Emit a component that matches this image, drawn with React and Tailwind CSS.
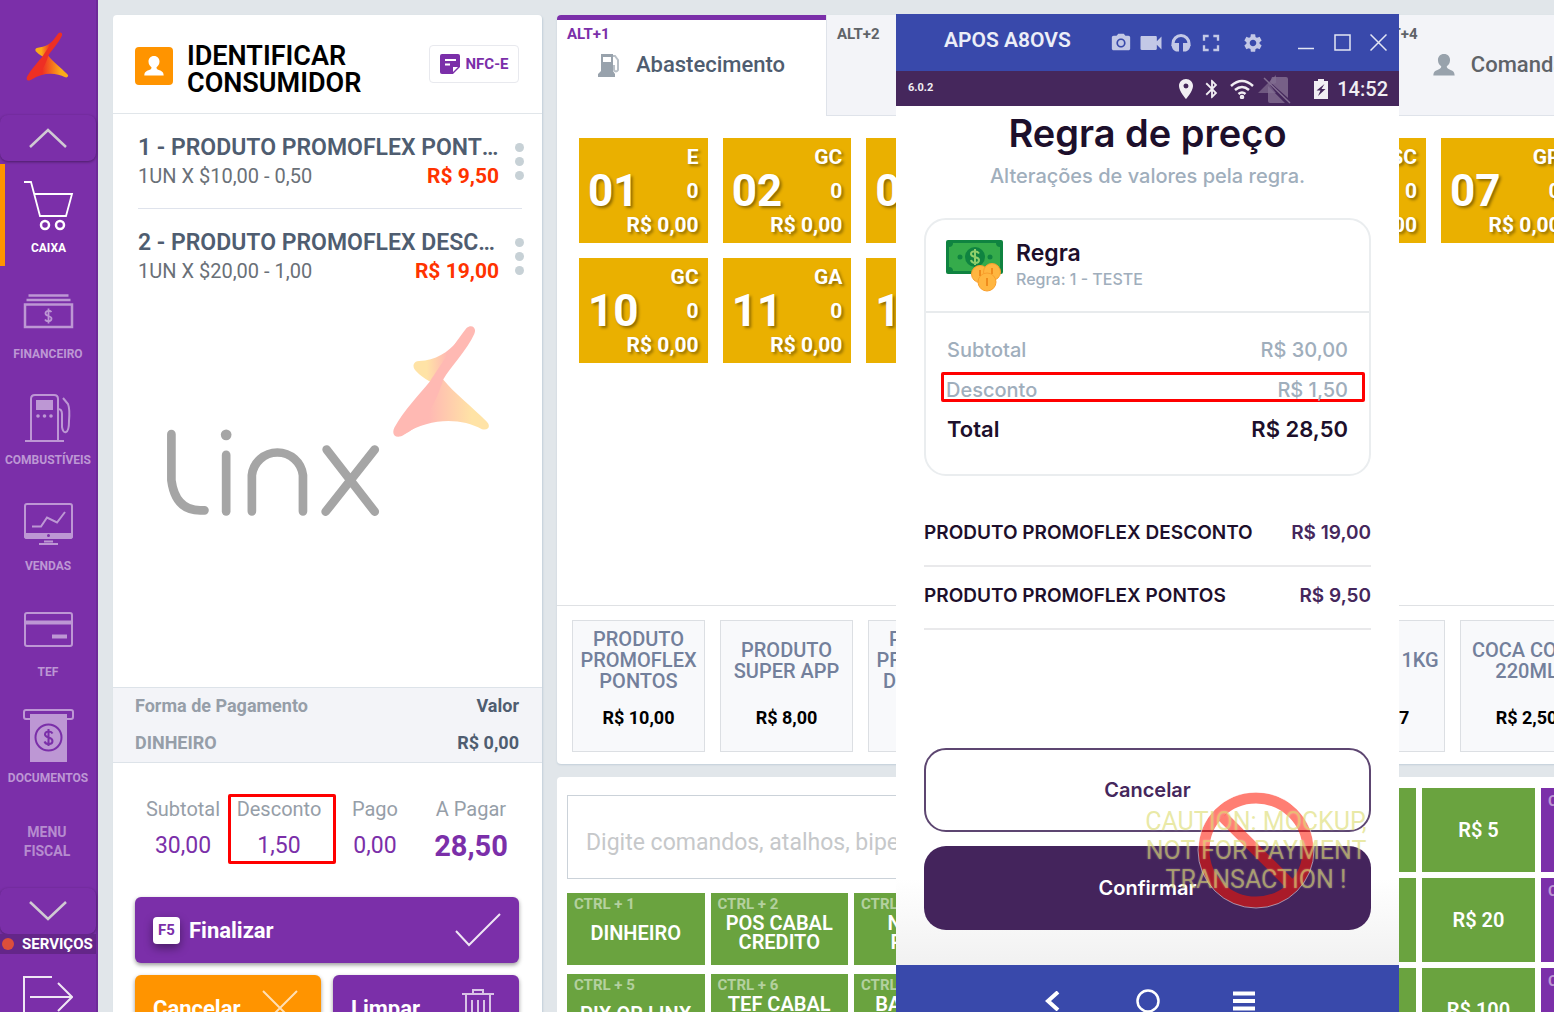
import React from "react"
import {
  MdPhotoCamera, MdVideocam, MdFullscreen, MdSettings,
  MdLocationOn, MdBluetooth, MdWifi,
} from "react-icons/md"

const ROBOTO = "font-['Roboto','Liberation_Sans',sans-serif]"
const INTER = "font-['Inter','Liberation_Sans',sans-serif]"

function Star({ id, soft }) {
  const red = soft ? '#ffb9b3' : '#ee2f24'
  const yellow = soft ? '#ffe3a6' : '#fbab18'
  return (
    <g>
      <defs>
        <linearGradient id={id + 'a'} x1="0" x2="1" y1="0" y2="0">
          <stop offset="0.3" stopColor={yellow} />
          <stop offset="0.75" stopColor={red} />
        </linearGradient>
        <linearGradient id={id + 'b'} x1="0" x2="1" y1="0" y2="0">
          <stop offset="0.3" stopColor={red} />
          <stop offset="0.8" stopColor={yellow} />
        </linearGradient>
      </defs>
      <path fill={`url(#${id}a)`} d="M1042 92 C1012 128 975 150 926 153 C907 154 905 170 915 181 Q932 200 958 214 L1000 190 Z" />
      <path fill={`url(#${id}b)`} d="M998 208 C1030 248 1085 290 1128 334 C1142 348 1133 362 1114 357 C1050 322 960 322 880 372 L940 240 Z" />
      <path fill={red} d="M1068 54 C1082 41 1100 52 1091 72 C1070 120 1020 170 998 208 C985 255 955 312 925 345 C905 358 885 372 872 378 C852 384 843 370 852 352 C880 300 925 255 958 214 C985 175 1035 95 1068 54 Z" />
    </g>
  )
}

function LinxLogo() {
  return (
    <svg viewBox="168 45 970 575" className="h-[192px] w-[324px]" role="img" aria-label="Linx">
      <Star id="big" soft />
      <g fill="none" stroke="#a5a5a5" strokeWidth="26" strokeLinecap="round">
        <path d="M184 372 V510 Q196 600 270 600 H283" />
        <path d="M348 434 V603" />
        <path d="M425 603 V495 A77 77 0 0 1 578 495 V603" />
        <path d="M649 418 L793 604 M793 418 L646 604" />
      </g>
      <circle cx="348" cy="374" r="16" fill="#a5a5a5" />
    </svg>
  )
}

function PersonIcon({ className }) {
  return (
    <svg viewBox="0 0 20 20" className={className} fill="currentColor" aria-hidden="true">
      <path d="M10 0 C6.500 0 4.500 2.500 4.500 5.500 C4.500 8.500 6 10 7.500 11.200 C7.500 13 6.500 13.500 4.500 14.300 C2 15.300 0.500 16 0.300 19.500 H19.700 C19.500 16 18 15.300 15.500 14.300 C13.500 13.500 12.500 13 12.500 11.200 C14 10 15.500 8.500 15.500 5.500 C15.500 2.500 13.500 0 10 0 Z" />
    </svg>
  )
}

const line = { fill: 'none', stroke: 'currentColor', strokeWidth: 2 }

const menu = [
  {
    label: 'CAIXA',
    active: true,
    icon: (
      <g {...line}>
        <path d="M0 3 H7 L16 37 H42 L48 15 H10.500" strokeWidth="1.800" />
        <circle cx="21" cy="46" r="4" strokeWidth="2.500" />
        <circle cx="36" cy="46" r="4" strokeWidth="2.500" />
      </g>
    ),
  },
  {
    label: 'FINANCEIRO',
    icon: (
      <g {...line}>
        <path d="M4.500 10.500 H44.500 M2.500 15 H46.500" strokeWidth="2.500" />
        <path d="M1 19.500 H48 V42 H1 Z" strokeWidth="2.500" />
        <path d="M27.500 27 C26 25 21.500 25.500 21.500 28.500 C21.500 31.500 27.500 30.500 27.500 33.500 C27.500 37 22.500 37 21 34.500 M24.500 23.500 V38.500" strokeWidth="1.800" />
      </g>
    ),
  },
  {
    label: 'COMBUSTÍVEIS',
    icon: (
      <g {...line}>
        <path d="M1 50 H40 M7 50 V8 Q7 4 11 4 H30 Q34 4 34 8 V50" />
        <path d="M34 18 Q38 18 38 23 V36 Q39 42 42 41 Q45 40 45 30 Q46 18 44 13 L39 7" />
        <path d="M12 9 H29 V19 H12 Z" fill="currentColor" stroke="none" />
        <g fill="currentColor" stroke="none">
          <circle cx="14" cy="25" r="1.800" />
          <circle cx="20.500" cy="25" r="1.800" />
          <circle cx="27" cy="25" r="1.800" />
        </g>
      </g>
    ),
  },
  {
    label: 'VENDAS',
    icon: (
      <g {...line}>
        <rect x="1" y="7" width="47" height="34" rx="2" />
        <path d="M1 37 H48 V39 Q48 41 46 41 H3 Q1 41 1 39 Z" fill="currentColor" />
        <circle cx="24.500" cy="38.500" r="1.500" fill="#7b2fa9" stroke="none" />
        <path d="M20 44.500 H29 M15 47 H34" />
        <path d="M8 29.500 H17 L23 20.500 L33 25.500 L41 15" />
      </g>
    ),
  },
  {
    label: 'TEF',
    icon: (
      <g {...line}>
        <rect x="1" y="10" width="47" height="33" rx="2" />
        <path d="M1 19.500 H48" strokeWidth="4" />
        <path d="M28 33.500 H43" strokeWidth="4" />
      </g>
    ),
  },
  {
    label: 'DOCUMENTOS',
    icon: (
      <g {...line}>
        <path d="M6 10 H2 Q0 10 0 8 V3 Q0 1 2 1 H47 Q49 1 49 3 V8 Q49 10 47 10 H43" />
        <path d="M6 5 H43 V53 H6 Z" fill="currentColor" stroke="none" />
        <circle cx="24.500" cy="28.500" r="13" stroke="#7b2fa9" />
        <path d="M28.500 24.500 C27 21.500 21 22 21 25.500 C21 29.500 28.500 27.500 28.500 32 C28.500 36 22 36 20.500 32.500 M24.500 20 V37" stroke="#7b2fa9" />
      </g>
    ),
  },
]

function Sidebar() {
  return (
    <aside className="w-[98px] shrink-0 bg-[#7b2fa9] border-r-2 border-[#6d2a98] text-white">
      <div className="flex h-[115px] items-center justify-center pr-[2px] pb-[2px]">
        <svg viewBox="845 45 295 338" className="h-[49px] w-[43px]" role="img" aria-label="Linx">
          <Star id="small" />
        </svg>
      </div>
      <button type="button" aria-label="Subir" className="flex h-[46px] w-full items-center justify-center rounded-lg shadow-[0_1px_3px_rgba(0,0,0,0.4)]">
        <svg viewBox="0 0 38 20" className="h-5 w-[38px]" fill="none" stroke="#d0cad3" strokeWidth="2.500"><path d="M1 19 L19 2 L37 19" /></svg>
      </button>
      <nav className="mt-[3px] flex flex-col gap-1">
        {menu.map((item) => (
          <a
            key={item.label}
            href="#"
            className={
              item.active
                ? 'flex h-[102px] flex-col items-center gap-[7px] border-l-[5px] border-[#ff9400] pt-[15px] pr-1 text-white'
                : 'flex h-[102px] flex-col items-center gap-[7px] pt-[15px] text-[#bd97d4]'
            }
          >
            <svg viewBox="-1 0 51 54" className="h-[54px] w-[51px]" aria-hidden="true">{item.icon}</svg>
            <span className="text-xs leading-4 font-bold">{item.label}</span>
          </a>
        ))}
        <a href="#" className="flex h-[85px] items-center justify-center pr-[2px] pb-px text-center text-sm leading-[19px] font-bold text-[#b68ccf]">MENU<br />FISCAL</a>
      </nav>
      <button type="button" aria-label="Descer" className="mt-[3px] flex h-[46px] w-full items-center justify-center rounded-lg shadow-[0_1px_3px_rgba(0,0,0,0.4)]">
        <svg viewBox="0 0 38 20" className="h-5 w-[38px]" fill="none" stroke="#d0cad3" strokeWidth="2.500"><path d="M1 1 L19 18 L37 1" /></svg>
      </button>
      <div className="flex h-5 items-center gap-2 bg-[#642689] pl-[2px] text-[15px] font-bold">
        <span className="size-3 rounded-full bg-[#db4e3b]" />
        SERVIÇOS
      </div>
      <button type="button" aria-label="Sair" className="flex w-full justify-center pt-[21px]">
        <svg viewBox="0 0 50 44" className="h-11 w-[50px]" fill="none" stroke="#efe6f4" strokeWidth="2"><path d="M29 2 H1 V42 H29 M7 22 H48 M35 8 L49 22 L35 36" /></svg>
      </button>
    </aside>
  )
}

const items = [
  { name: '1 - PRODUTO PROMOFLEX PONTOS', detail: '1UN X $10,00 - 0,50', price: 'R$ 9,50' },
  { name: '2 - PRODUTO PROMOFLEX DESCONTO', detail: '1UN X $20,00 - 1,00', price: 'R$ 19,00' },
]

function Sale() {
  return (
    <section className="flex w-[429px] shrink-0 flex-col self-start rounded bg-white shadow-[1px_1px_2px_#c3cfd9]">
      <header className="flex h-[99px] items-center border-b border-[#e1e6ea] pr-[23px] pl-[22px]">
        <span className="mt-1 flex size-[38px] items-center justify-center rounded bg-[#ff9400] text-white">
          <PersonIcon className="size-5" />
        </span>
        <h1 className="ml-[14px] flex-1 pt-3 text-[27px] leading-[27px] font-semibold text-black">IDENTIFICAR<br />CONSUMIDOR</h1>
        <button type="button" className="flex h-[38px] w-[90px] items-center justify-center gap-[6px] rounded border border-[#e8e9ee] text-[15px] font-bold text-[#7b2fa9]">
          <svg viewBox="0 0 20 20" className="size-5" aria-hidden="true">
            <path fill="#7b2fa9" d="M2 0 H18 Q20 0 20 2 V13 L13 20 H2 Q0 20 0 18 V2 Q0 0 2 0 Z" />
            <path stroke="#fff" strokeWidth="2" d="M5 6 H16 M5 10.500 H10" />
            <path fill="#fff" d="M13 18 V13 H18 Z" />
          </svg>
          NFC-E
        </button>
      </header>

      <div className="min-h-[573px] pl-[25px] pr-5">
        <ul>
          {items.map((item, i) => (
            <li key={item.name} className={i === 0 ? 'flex h-[95px] border-b border-[#dfe3ec] pt-[19px]' : 'flex h-[95px] pt-[19px]'}>
              <div className="w-[361px]">
                <p className="truncate text-[23px] leading-[30px] font-semibold text-[#4f5d70]">{item.name}</p>
                <p className="flex justify-between text-xl leading-[27px] text-[#6a7077]">
                  {item.detail}
                  <span className="text-[21px] font-bold text-[#ff3300]">{item.price}</span>
                </p>
              </div>
              <button type="button" aria-label="Opções" className="ml-4 flex flex-col gap-[5px] pt-[10px]">
                <span className="size-[9px] rounded-full bg-[#c7d1d6]" />
                <span className="size-[9px] rounded-full bg-[#c7d1d6]" />
                <span className="size-[9px] rounded-full bg-[#c7d1d6]" />
              </button>
            </li>
          ))}
        </ul>
        <div className="pt-[21px] pl-7"><LinxLogo /></div>
      </div>

      <table className="w-full border-y border-[#dde3e9] bg-[#f3f4f8] text-lg font-bold text-[#4f5d70]">
        <tbody>
          <tr className="h-[37px]">
            <th className="pl-[22px] text-left font-bold text-[#969ea8]">Forma de Pagamento</th>
            <th className="pr-[23px] text-right font-bold">Valor</th>
          </tr>
          <tr className="h-[38px]">
            <td className="pl-[22px] text-[#969ea8]">DINHEIRO</td>
            <td className="pr-[23px] text-right">R$ 0,00</td>
          </tr>
        </tbody>
      </table>

      <div className="px-[22px] pt-[31px]">
        <dl className="mr-px grid grid-cols-4 text-center">
          <div className="flex h-[70px] flex-col">
            <dt className="pt-[3px] text-xl leading-6 text-[#969ea8]">Subtotal</dt>
            <dd className="pt-2 text-[23px] leading-[34px] text-[#7b2fa9]">30,00</dd>
          </div>
          <div className="-mr-[9px] -ml-[3px] flex h-[70px] flex-col rounded-xs border-[3px] border-[#ff0000] pr-[6px]">
            <dt className="text-xl leading-6 text-[#969ea8]">Desconto</dt>
            <dd className="pt-2 text-[23px] leading-[34px] text-[#7b2fa9]">1,50</dd>
          </div>
          <div className="flex h-[70px] flex-col">
            <dt className="pt-[3px] text-xl leading-6 text-[#969ea8]">Pago</dt>
            <dd className="pt-2 text-[23px] leading-[34px] text-[#7b2fa9]">0,00</dd>
          </div>
          <div className="flex h-[70px] flex-col">
            <dt className="pt-[3px] text-xl leading-6 text-[#969ea8]">A Pagar</dt>
            <dd className="pt-2 text-[29px] leading-[34px] font-bold text-[#7b2fa9]">28,50</dd>
          </div>
        </dl>
        <div className="mt-[33px] mr-px grid grid-cols-2 gap-3 pb-6 text-[22px] font-bold text-white">
          <button type="button" className="col-span-2 flex h-[66px] items-center rounded-md bg-[#7b2fa9] px-[18px] shadow-[0_2px_4px_rgba(0,0,0,0.4)]">
            <span className="flex size-[27px] items-center justify-center rounded bg-white text-[15px] font-bold text-[#7b2fa9] shadow-[0_4px_10px_rgba(0,0,0,0.4)]">F5</span>
            <span className="ml-[9px] flex-1 text-left">Finalizar</span>
            <svg viewBox="0 0 46 34" className="h-[34px] w-[46px]" fill="none" stroke="#efe6f4" strokeWidth="2"><path d="M1 18 L14 32 L45 1" /></svg>
          </button>
          <button type="button" className="flex h-[66px] items-center justify-between rounded-md bg-[#ff9400] px-[18px] shadow-[0_2px_4px_rgba(0,0,0,0.4)]">
            Cancelar
            <svg viewBox="0 0 46 36" className="h-9 w-[46px]" fill="none" stroke="#ffe0b5" strokeWidth="2"><path d="M6 1 L40 35 M40 1 L6 35" /></svg>
          </button>
          <button type="button" className="flex h-[66px] items-center justify-between rounded-md bg-[#7b2fa9] px-[18px] shadow-[0_2px_4px_rgba(0,0,0,0.4)]">
            Limpar
            <svg viewBox="0 0 46 40" className="h-10 w-[46px]" fill="none" stroke="#d9c3e6" strokeWidth="2"><path d="M7 6 H39 M18 6 V2 H28 V6 M11 6 V38 H35 V6 M17 12 V34 M23 12 V34 M29 12 V34" /></svg>
          </button>
        </div>
      </div>
    </section>
  )
}

const pumps = [
  ['01', 'E'], ['02', 'GC'], ['03', 'GA'], ['04', 'E'], ['05', 'GC'], ['06', 'SC'],
  ['07', 'GP'], ['08', 'E'], ['09', 'GC'], ['10', 'GC'], ['11', 'GA'], ['12', 'E'],
]

const products = [
  ['PRODUTO PROMOFLEX PONTOS', 'R$ 10,00'],
  ['PRODUTO SUPER APP', 'R$ 8,00'],
  ['PRODUTO PROMOFLEX DESCONTO', 'R$ 20,00'],
  ['AGUA MINERAL', 'R$ 3,00'],
  ['CAFE', 'R$ 4,00'],
  ['ACUCAR 1KG', 'R$ 5,97'],
  ['COCA COLA 220ML', 'R$ 2,50'],
]

const payments = [
  'DINHEIRO', 'POS CABAL CREDITO', 'NOTA A PRAZO', 'CHEQUE',
  'PIX QR LINX', 'TEF CABAL DEBITO', 'BANRISUL DEBITO', 'CARTEIRA',
]

const cash = ['R$ 2', 'R$ 5', 'CTRL + Q', 'R$ 10', 'R$ 20', 'CTRL + W', 'R$ 50', 'R$ 100', 'CTRL + E']

function FuelIcon() {
  return (
    <svg viewBox="0 0 22 24" className="h-6 w-[22px]" aria-hidden="true">
      <path fill="#98a2ac" d="M3 1 H15 V18 L17 21 V24 H0 V21 L3 18 Z" />
      <path fill="#fff" d="M5 4 H13 V9 H5 Z" />
      <path fill="none" stroke="#b9c0c7" strokeWidth="2" d="M15 3 H17 L20 7 V17 Q18 20 16 17 V12" />
    </svg>
  )
}

const tabs = [
  { key: 'ALT+1', label: 'Abastecimento', icon: <FuelIcon /> },
  { key: 'ALT+2', label: 'Produtos', icon: null },
  { key: 'ALT+3', label: 'Pedidos', icon: null },
  { key: 'ALT+4', label: 'Comanda', icon: <PersonIcon className="size-[22px] text-[#98a2ac]" /> },
]

function Workspace() {
  return (
    <main className="min-w-0 flex-1">
      <div className="min-w-[1322px]">
        <section className="rounded bg-white shadow-[0_1px_2px_#c3cfd9]">
          <div className="flex rounded-t bg-[#f3f4f8]">
            {tabs.map((tab, i) => (
              <button
                key={tab.key}
                type="button"
                className={
                  i === 0
                    ? 'flex h-[101px] w-[269px] shrink-0 flex-col items-start rounded-tl border-t-[5px] border-[#7b2fa9] bg-white px-[10px] pt-1 text-[#7b2fa9]'
                    : 'flex h-[101px] w-[269px] shrink-0 flex-col items-start border-b border-l border-[#dfe3ea] px-[10px] pt-[9px] text-[#5f6368]'
                }
              >
                <span className="text-[15px] leading-5 font-bold">{tab.key}</span>
                <span className={i === 0 ? 'flex w-full items-center justify-center gap-4 pt-[7px] text-[22px] leading-7 font-medium text-[#4f5d70]' : 'flex w-full items-center justify-center gap-4 pt-[7px] text-[22px] leading-7 font-medium text-[#5f6368]'}>
                  {tab.icon}
                  {tab.label}
                </span>
              </button>
            ))}
            <div className="flex-1 border-b border-[#dfe3ea]" />
          </div>
          <div className="grid min-h-[489px] grid-cols-9 content-start gap-[15px] px-[22px] pt-[22px]">
            {pumps.map(([number, fuel]) => (
              <button key={number} type="button" className="flex h-[105px] items-center justify-between bg-[#eab000] pr-[9px] pl-[9px] text-[21px] leading-[34px] font-bold text-white [text-shadow:2px_2px_3px_rgba(0,0,0,0.4)]">
                <span className="text-[44px]">{number}</span>
                <span className="-ml-10 flex flex-col text-right">
                  <span>{fuel}</span>
                  <span>0</span>
                  <span>R$ 0,00</span>
                </span>
              </button>
            ))}
          </div>
          <div className="flex gap-[15px] border-t border-[#dfe1e4] px-[15px] pt-[14px] pb-3">
            {products.map(([name, price]) => (
              <button key={name} type="button" className="flex h-[132px] w-[133px] shrink-0 flex-col items-center border border-[#dcdfe3] bg-[#f8f9fb] pt-2 text-black">
                <span className="flex h-[63px] w-full items-center justify-center px-[5px] text-xl leading-[21px] font-medium text-[#73809b]">{name}</span>
                <span className="pt-3 text-lg font-bold">{price}</span>
              </button>
            ))}
          </div>
        </section>

        <section className="mt-[13px] flex rounded bg-white pb-6 pl-[10px]">
          <div className="w-[568px] shrink-0 pt-[18px]">
            <input aria-label="Comando" placeholder="Digite comandos, atalhos, bipe o produto" className="h-[84px] w-full border border-[#cbd2d9] px-[18px] pt-[10px] text-[23px] placeholder:text-[#c6c8ca]" />
            <div className="mt-[14px] grid grid-cols-4 gap-x-[6px] gap-y-[9px]">
              {payments.map((label, i) => (
                <button key={label} type="button" className="relative flex h-[72px] items-center justify-center bg-[#6aa33f] px-2 pt-2 text-xl leading-[19px] font-semibold text-white">
                  <span className="absolute top-[2px] left-[7px] text-[15px] font-bold text-white/50">CTRL + {i + 1}</span>
                  {label}
                </button>
              ))}
            </div>
          </div>
          <div className="ml-[168px] grid auto-rows-[84px] grid-cols-[repeat(3,113px)] gap-[6px] pt-[11px]">
            {cash.map((label, i) => (
              i % 3 === 2
                ? <button key={label} type="button" className="flex bg-[#7b2fa9] pt-[2px] pl-[7px] text-[15px] font-bold text-white/50">{label}</button>
                : <button key={label} type="button" className="bg-[#6aa33f] text-xl font-semibold text-white">{label}</button>
            ))}
          </div>
        </section>
      </div>
    </main>
  )
}

function MoneyIcon() {
  return (
    <svg viewBox="0 0 57 52" className="h-[52px] w-[57px]" aria-hidden="true">
      <rect width="57" height="34" rx="2" fill="#0f8340" />
      <path fill="#35ab4b" d="M7 3 H50 Q50 7 54 7 V27 Q50 27 50 31 H7 Q7 27 3 27 V7 Q7 7 7 3 Z" />
      <circle cx="29" cy="17" r="10" fill="#0f8340" />
      <circle cx="14" cy="17" r="2.500" fill="#0f8340" />
      <circle cx="44" cy="17" r="2.500" fill="#0f8340" />
      <path fill="none" stroke="#8fcf6a" strokeWidth="2" d="M33 13.500 C31 10 25 11 25 14 C25 18 33 16 33 20 C33 24 26 24 25 20 M29 9 V25" />
      <g fill="#ffb640" stroke="#f99f2c">
        <circle cx="34" cy="34" r="8.500" />
        <circle cx="46" cy="32" r="8.500" />
        <circle cx="41" cy="42" r="9" />
      </g>
      <path stroke="#f08c1c" strokeWidth="2" d="M34 30 V36 M46 28 V34 M41 38 V46" />
    </svg>
  )
}

function Device() {
  return (
    <div className={`absolute top-[14px] bottom-0 left-[896px] flex w-[503px] flex-col bg-white ${INTER}`}>
      <div className={`flex h-[57px] shrink-0 items-center bg-[#3949ab] pr-[3px] pl-12 text-[#c3c8e6] ${ROBOTO}`}>
        <span className="mb-[3px] flex-1 text-[21px] font-semibold text-[#eceef8]">APOS A8OVS</span>
        <button type="button" aria-label="Foto" className="flex w-[30px] justify-center"><MdPhotoCamera className="size-[22px]" /></button>
        <button type="button" aria-label="Vídeo" className="flex w-[30px] justify-center"><MdVideocam className="size-7" /></button>
        <button type="button" aria-label="Áudio" className="flex w-[30px] justify-center">
          <svg viewBox="0 0 20 18" className="h-[18px] w-5" fill="currentColor" aria-hidden="true">
            <path fill="none" stroke="currentColor" strokeWidth="3" d="M2 12 V9.500 A8 8 0 0 1 18 9.500 V12" />
            <path d="M2.500 9 H8 V17.500 H5 Q1 16 0.500 11 Z M12 9 H17.500 L19.500 11 Q19 16 15 17.500 H12 Z" />
          </svg>
        </button>
        <button type="button" aria-label="Tela cheia" className="flex w-[30px] justify-center"><MdFullscreen className="size-7" /></button>
        <button type="button" aria-label="Configurações" className="mx-3 flex w-[30px] justify-center"><MdSettings className="size-[22px]" /></button>
        <button type="button" aria-label="Minimizar" className="ml-2 flex w-9 justify-center">
          <svg viewBox="0 0 17 17" className="size-[17px]" stroke="#e3e6f4" strokeWidth="1.500"><path d="M0 14.500 H16" /></svg>
        </button>
        <button type="button" aria-label="Maximizar" className="flex w-9 justify-center">
          <svg viewBox="0 0 17 17" className="size-[17px]" fill="none" stroke="#e3e6f4" strokeWidth="1.500"><path d="M1 1 H16 V16 H1 Z" /></svg>
        </button>
        <button type="button" aria-label="Fechar" className="flex w-9 justify-center">
          <svg viewBox="0 0 17 17" className="size-[17px]" stroke="#e3e6f4" strokeWidth="1.500"><path d="M0.500 0.500 L16.500 16.500 M16.500 0.500 L0.500 16.500" /></svg>
        </button>
      </div>
      <div className={`flex h-[35px] shrink-0 items-center bg-[#45275c] pr-[11px] pl-3 text-[#f1eef3] ${ROBOTO}`}>
        <span className="flex-1 text-[11px] font-bold">6.0.2</span>
        <MdLocationOn className="size-6" />
        <MdBluetooth className="mx-[3px] size-[22px]" />
        <svg viewBox="0 0 24 20" className="ml-1 h-5 w-6" fill="none" stroke="currentColor" strokeWidth="2.500" aria-hidden="true">
          <path d="M1 7 Q12 -3 23 7 M5 11 Q12 5 19 11 M8.500 15 Q12 12 15.500 15" />
          <circle cx="12" cy="18" r="1" />
        </svg>
        <svg viewBox="0 0 34 30" className="ml-1 h-[30px] w-[34px]" fill="#836f92" aria-hidden="true">
          <path d="M0 19 L18 1 V9 L12 11 L18 19 Z" opacity="0.7" />
          <path d="M14 3 H28 Q30 3 30 5 V24 L12 8 Z M10 12 L27 29 H12 Q10 29 10 27 Z" opacity="0.8" />
          <path stroke="#836f92" strokeWidth="1.500" d="M6 4 L32 29" />
        </svg>
        <svg viewBox="0 0 14 20" className="mr-[3px] ml-[22px] h-5 w-[14px]" fill="currentColor" aria-hidden="true">
          <path d="M4 0 H10 V2 H14 V20 H0 V2 H4 Z" />
          <path fill="#45275c" d="M10.500 5 L2.500 11.500 H6.500 L4 17 L11.500 10 H7.500 Z" />
        </svg>
        <span className="ml-[6px] text-xl font-medium">14:52</span>
      </div>

      <div className="relative flex min-h-0 flex-1 flex-col bg-linear-to-t from-[#f1f1f1] via-white via-10% to-white px-7">
        <h2 className="pt-[3px] text-center text-[38px] leading-[48px] font-semibold text-[#1d0f2b]">Regra de preço</h2>
        <p className="pt-[5px] text-center text-xl leading-7 font-medium text-[#a0aebc]">Alterações de valores pela regra.</p>

        <div className="mt-7 h-[258px] shrink-0 rounded-[22px] border-2 border-[#eaedef]">
          <div className="flex h-[93px] items-center border-b-2 border-[#e8ebed] pl-5">
            <MoneyIcon />
            <div className="mb-[2px] ml-[13px]">
              <h3 className="text-[23px] leading-7 font-semibold text-[#1d0f2b]">Regra</h3>
              <p className="text-base leading-6 font-medium text-[#a0aebc]">Regra: 1 - TESTE</p>
            </div>
          </div>
          <dl className="pt-4 text-xl font-medium text-[#a0aebc]">
            <div className="flex h-10 items-center justify-between px-[21px] pt-[2px]"><dt>Subtotal</dt><dd>R$ 30,00</dd></div>
            <div className="my-[3px] mr-1 ml-[15px] flex h-[30px] items-center justify-between rounded-xs border-[3px] border-[#ff0000] pt-[6px] pr-[14px] pl-[2px] leading-6"><dt>Desconto</dt><dd>R$ 1,50</dd></div>
            <div className="flex h-12 items-center justify-between px-[21px] pt-px text-[22px] font-semibold text-[#1d0f2b]"><dt>Total</dt><dd>R$ 28,50</dd></div>
          </dl>
        </div>

        <ul className="mt-[23px] text-[19px] font-semibold text-[#1d0f2b]">
          <li className="flex h-[68px] items-center justify-between border-b-2 border-[#e9e9eb] pt-[2px]">PRODUTO PROMOFLEX DESCONTO<span className="text-[#45275c]">R$ 19,00</span></li>
          <li className="flex h-[63px] items-center justify-between border-b-2 border-[#e9e9eb] pb-[2px]">PRODUTO PROMOFLEX PONTOS<span className="text-[#45275c]">R$ 9,50</span></li>
        </ul>

        <div className="mt-auto mb-[35px] flex flex-col gap-[14px] text-xl font-semibold">
          <button type="button" className="h-[84px] rounded-[22px] border-2 border-[#5d4671] bg-white text-[#45275c]">Cancelar</button>
          <button type="button" className="h-[84px] rounded-[22px] bg-[#44245c] text-white">Confirmar</button>
        </div>

        <div className={`pointer-events-none absolute right-7 bottom-[55px] flex h-[120px] w-[230px] items-center justify-center ${ROBOTO}`}>
          <svg viewBox="0 0 120 120" className="absolute size-[120px]" fill="none" aria-hidden="true">
            <circle cx="60" cy="60" r="52" stroke="rgba(255,20,0,0.55)" strokeWidth="11" />
            <path stroke="rgba(255,20,0,0.55)" strokeWidth="11" d="M27 27 L93 93" />
            <circle cx="60" cy="60" r="58" stroke="rgba(255,255,255,0.5)" />
          </svg>
          <p className="relative text-center text-[25px] leading-[29px] whitespace-nowrap text-[#d6d65a]/55 [text-shadow:0_0_2px_rgba(255,255,255,0.35)]">CAUTION: MOCKUP,<br />NOT FOR PAYMENT<br />TRANSACTION !</p>
        </div>
      </div>

      <div className="flex h-[47px] shrink-0 items-end justify-center gap-[72px] overflow-hidden bg-[#3949ab]">
        <button type="button" aria-label="Voltar" className="pb-px"><svg viewBox="0 0 24 20" className="h-5 w-6" fill="none" stroke="#fff" strokeWidth="4"><path d="M18 1 L8 10 L18 19" /></svg></button>
        <button type="button" aria-label="Início"><svg viewBox="0 0 24 24" className="-mb-px size-6" fill="none" stroke="#fff" strokeWidth="2.500"><circle cx="12" cy="12" r="10.500" /></svg></button>
        <button type="button" aria-label="Menu" className="pb-px"><svg viewBox="0 0 24 20" className="h-5 w-6" stroke="#fff" strokeWidth="4"><path d="M1 2.500 H23 M1 10 H23 M1 17.500 H23" /></svg></button>
      </div>
    </div>
  )
}

export default function App() {
  return (
    <div className={`relative flex h-screen overflow-hidden bg-[#e1e6ea] ${ROBOTO}`}>
      <Sidebar />
      <div className="flex min-w-0 flex-1 gap-[15px] pt-[15px] pl-[15px]">
        <Sale />
        <Workspace />
      </div>
      <Device />
    </div>
  )
}
